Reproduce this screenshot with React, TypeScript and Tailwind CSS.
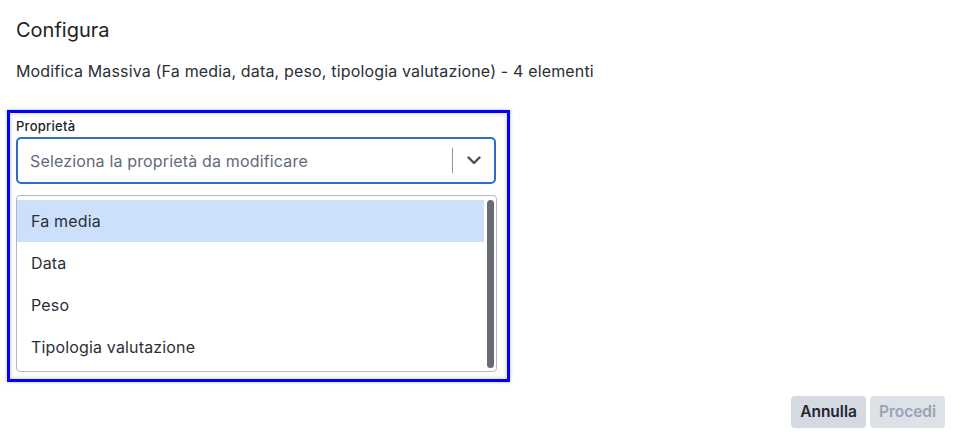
import React from 'react';

const options = ['Fa media', 'Data', 'Peso', 'Tipologia valutazione'];

export default function App() {
  return (
    <div
      className="w-[961px] h-[443px] bg-white flex flex-col text-[#212529] overflow-hidden"
      style={{ fontFamily: 'Inter, "Noto Sans", sans-serif' }}
    >
      {/* Header */}
      <div className="px-4 pt-[17px] text-[20px] leading-[26px] text-[#222]">Configura</div>
      <div className="px-4 pt-[18px] text-[16px] leading-[20px] tracking-[0.01em] text-[#2b2f36]">
        Modifica Massiva (Fa media, data, peso, tipologia valutazione) - 4 elementi
      </div>

      {/* Highlighted field */}
      <div className="ml-[7px] mt-[29px] w-[503px] h-[272px] border-[3px] border-[#0000ff] shadow-[inset_0_0_4px_rgba(0,0,0,0.25),0_0_3px_rgba(0,0,0,0.3)] px-[6px] pt-[5px] flex flex-col">
        <label className="text-[13px] leading-[16px] tracking-[0.02em] text-[#212529] font-medium">Proprietà</label>
        <div className="mt-[3px] w-[480px] h-[47px] border-2 border-[#2f6cc6] rounded-[5px] flex items-center pl-[12px] bg-white">
          <span className="flex-1 text-[16px] tracking-[0.01em] text-[#5f6b7a]">Seleziona la proprietà da modificare</span>
          <span className="w-px h-[25px] bg-[#8a94a3]" />
          <span className="w-[41px] flex justify-center">
            <svg width="14" height="9" viewBox="0 0 14 9" fill="none">
              <path d="M1.5 1.5L7 7L12.5 1.5" stroke="#48505c" strokeWidth="2.4" strokeLinecap="round" strokeLinejoin="round" />
            </svg>
          </span>
        </div>

        <div className="mt-[11px] w-[481px] h-[177px] border border-[#b4b9c4] rounded-[4px] bg-white flex pt-[4px] pb-[3px]">
          <div className="flex-1 flex flex-col">
            {options.map((o, i) => (
              <div
                key={o}
                className={`h-[42px] flex items-center pl-[14px] text-[16px] tracking-[0.01em] text-[#2b2f36] ${i === 0 ? 'bg-[#cce0fc]' : ''}`}
              >
                {o}
              </div>
            ))}
          </div>
          <div className="w-[12px] flex justify-center">
            <div className="w-[7px] h-full rounded-full bg-[#686b74]" />
          </div>
        </div>
      </div>

      {/* Footer */}
      <div className="flex justify-end gap-[4px] pr-4 mt-[14px]">
        <button className="w-[75px] h-[32px] rounded-[4px] bg-[#d5d9e1] text-[15.5px] font-semibold text-[#1f2630]">
          Annulla
        </button>
        <button className="w-[75px] h-[32px] rounded-[4px] bg-[#dde1e8] text-[15.5px] font-semibold text-[#9aa3b2]">
          Procedi
        </button>
      </div>
    </div>
  );
}
